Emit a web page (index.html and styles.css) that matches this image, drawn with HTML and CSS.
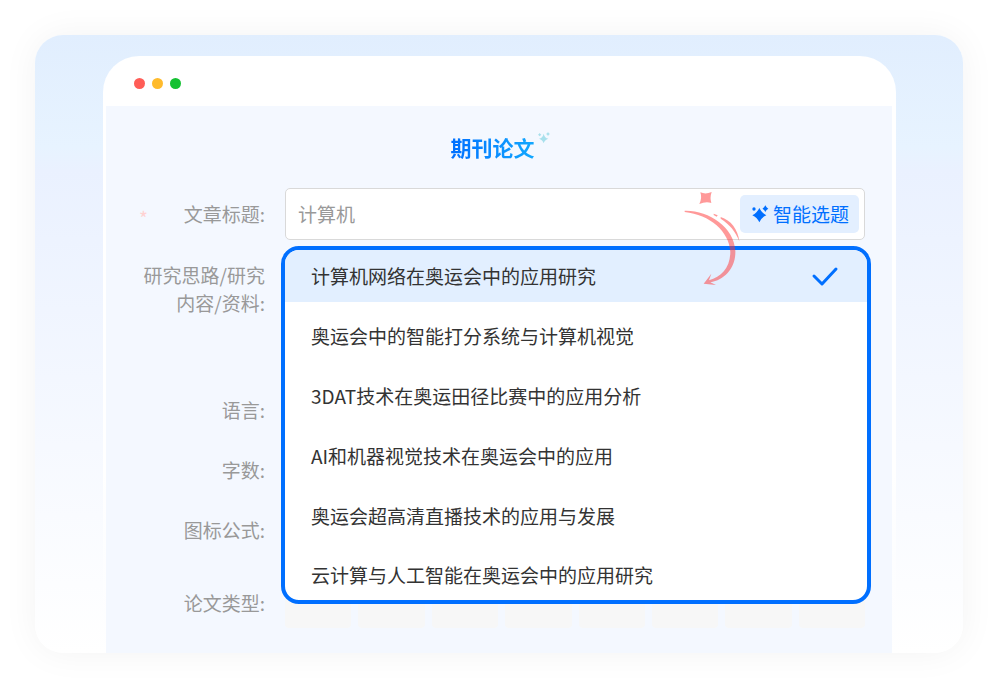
FILE: index.html
```html
<!DOCTYPE html>
<html lang="zh-CN">
<head>
<meta charset="UTF-8">
<meta name="viewport" content="width=device-width, initial-scale=1.0">
<title>期刊论文</title>
<link rel="stylesheet" href="styles.css">
</head>
<body>
<main class="card">
<section class="window">
<div class="window-bar">
<span class="dot red"></span>
<span class="dot yellow"></span>
<span class="dot green"></span>
</div>
<div class="window-body">
<h1 class="title">
<span class="title-text">期刊论文</span>
<svg class="title-star" viewBox="0 0 36 36" aria-hidden="true">
<path d="M17 5Q20 18 31 20Q20 23 17 34Q14 23 3 20Q14 18 17 5Z"/>
<path d="M30 0Q32 4 36 6Q32 8 30 12Q28 8 24 6Q28 4 30 0Z"/>
<path d="M5 3Q7 6 10 8Q7 10 5 13Q3 10 0 8Q3 6 5 3Z"/>
</svg>
</h1>

<form class="form">
<div class="row">
<label class="label required" for="article-title"><span class="star">*</span>文章标题:</label>
<div class="field">
<div class="input-box">
<input class="input" type="text" id="article-title" value="计算机">
<button class="pick-btn" type="button">
<svg class="pick-icon" viewBox="0 0 54 54" aria-hidden="true">
<path d="M25 9Q32 24 46 31Q32 37 25 52Q18 37 4 31Q18 24 25 9Z"/>
<path d="M43 1Q46 8 52 11Q46 14 43 21Q40 14 34 11Q40 8 43 1Z"/>
<circle cx="9" cy="12" r="5"/>
</svg>
智能选题
</button>
</div>
<ul class="dropdown">
<li><button class="option selected" type="button">计算机网络在奥运会中的应用研究
<svg class="tick" viewBox="0 0 24 20" aria-hidden="true"><path d="M1 10L9 18L23 3"/></svg>
</button></li>
<li><button class="option" type="button">奥运会中的智能打分系统与计算机视觉</button></li>
<li><button class="option" type="button">3DAT技术在奥运田径比赛中的应用分析</button></li>
<li><button class="option" type="button">AI和机器视觉技术在奥运会中的应用</button></li>
<li><button class="option" type="button">奥运会超高清直播技术的应用与发展</button></li>
<li><button class="option last" type="button">云计算与人工智能在奥运会中的应用研究</button></li>
</ul>
<svg class="arrow" viewBox="39 30 180 300" aria-hidden="true">
<path d="M91 37Q107 44 125 36Q119 53 124 69Q107 64 88 72Q97 54 91 37Z"/>
<path d="M44 92C115 90 192 140 196 212C198 262 165 300 121 307L138 315L101 311L124 281L117 301C155 290 181 262 181 215C178 155 120 104 44 96Z"/>
<path d="M152 111C182 120 204 148 208 184C196 154 180 134 152 116Z"/>
<path d="M131 101L143 106L140 110L131 105Z"/>
</svg>
</div>
</div>
<div class="row row-content">
<span class="label">研究思路/研究内容/资料:</span>
</div>
<div class="row">
<span class="label">语言:</span>
</div>
<div class="row">
<span class="label">字数:</span>
</div>
<div class="row">
<span class="label">图标公式:</span>
</div>
<div class="row row-type">
<span class="label">论文类型:</span>
<div class="types">
<span class="type"></span>
<span class="type"></span>
<span class="type"></span>
<span class="type"></span>
<span class="type"></span>
<span class="type"></span>
<span class="type"></span>
<span class="type"></span>
</div>
</div>
</form>
</div>
</section>
</main>
</body>
</html>
```
FILE: styles.css
```css
* {
box-sizing: border-box;
}

body {
margin: 0;
padding: 35px 36px 36px 35px;
background: #fff;
font-family: "Noto Sans CJK SC", sans-serif;
font-size: 19px;
line-height: 28px;
color: #333;
}

button,
input {
font: inherit;
border: 0;
}

.card {
padding: 21px 67px 0 68px;
border-radius: 28px;
background: linear-gradient(#e1eefe 0%, #e7f3ff 18%, #eaf1ff 22%, #fff 100%);
box-shadow: 0 0 36px rgba(0, 0, 0, 0.05);
}

.window {
padding: 0 4px 0 3px;
border-radius: 36px 36px 0 0;
background: linear-gradient(#fff 70%, transparent);
}

.window-bar {
display: flex;
align-items: center;
gap: 7px;
height: 50px;
padding: 4px 28px 0;
}

.dot {
width: 11px;
height: 11px;
border-radius: 50%;
}

.red {
background: #ff5d57;
}

.yellow {
background: #ffbb2c;
}

.green {
background: #14c132;
}

.window-body {
padding: 26px 27px 24px 33px;
background: #f4f8ff;
}

.title {
display: flex;
justify-content: center;
gap: 3px;
margin: 0 0 26px;
padding-right: 4px;
font-size: 21px;
line-height: 30px;
}

.title-text {
background: linear-gradient(90deg, #0070ff, #12a8ff);
-webkit-background-clip: text;
background-clip: text;
color: transparent;
}

.title-star {
width: 12px;
height: 12px;
fill: #a8e0ec;
}

.form {
display: flex;
flex-direction: column;
gap: 8px;
}

.row {
display: flex;
align-items: center;
gap: 20px;
min-height: 52px;
}

.row-content {
align-items: flex-start;
min-height: 128px;
padding-top: 13px;
}

.row-type {
margin-top: 13px;
}

.label {
flex: none;
width: 126px;
text-align: right;
color: #999;
}

.required {
display: flex;
justify-content: space-between;
}

.star {
height: 28px;
padding-top: 4px;
color: #ffd2d2;
}

.field {
position: relative;
flex: 1;
}

.input-box {
display: flex;
align-items: center;
height: 52px;
padding: 0 5px 0 12px;
border: 1px solid #d9d9d9;
border-radius: 5px;
background: #fff;
}

.input {
flex: 1;
min-width: 0;
padding: 0;
outline: none;
background: none;
color: #999;
}

.pick-btn {
display: flex;
align-items: center;
gap: 4px;
height: 38px;
padding: 0 10px 0 11px;
border-radius: 5px;
background: #e3efff;
color: #006fff;
}

.pick-icon {
width: 18px;
height: 18px;
fill: #006fff;
}

.dropdown {
position: absolute;
top: 58px;
left: -4px;
right: -6px;
display: flex;
flex-direction: column;
gap: 8px;
margin: 0;
padding: 0;
list-style: none;
border: 4px solid #006fff;
border-radius: 18px;
background: #fff;
overflow: hidden;
}

.option {
display: flex;
align-items: center;
justify-content: space-between;
width: 100%;
height: 52px;
padding: 0 30px 0 26px;
background: none;
color: #333;
text-align: left;
}

.selected {
background: #e2efff;
}

.last {
height: 50px;
}

.tick {
width: 24px;
height: 20px;
fill: none;
stroke: #006fff;
stroke-width: 3;
stroke-linecap: round;
stroke-linejoin: round;
overflow: visible;
}

.arrow {
position: absolute;
top: 2px;
right: 122px;
width: 60px;
height: 100px;
fill: rgba(255, 51, 51, 0.5);
pointer-events: none;
}

.types {
display: flex;
flex: 1;
gap: 7px;
}

.type {
flex: 1;
height: 50px;
border-radius: 4px;
background: #f7f7f7;
}
```
